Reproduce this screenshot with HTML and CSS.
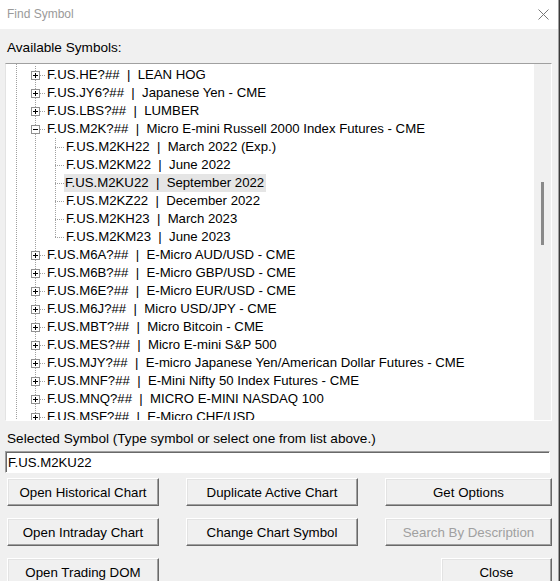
FILE: index.html
```html
<!DOCTYPE html>
<html lang="en">
<head>
    <meta charset="UTF-8">
    <title>Find Symbol</title>
    <link rel="stylesheet" href="styles.css">
</head>
<body>
    <div class="window">
        <div class="titlebar">
            <span class="title">Find Symbol</span>
            <svg class="close-x" width="11" height="11" viewBox="0 0 11 11">
                <path d="M0.5 0.5L10.5 10.5M10.5 0.5L0.5 10.5" stroke="#777" stroke-width="1"/>
            </svg>
        </div>

        <div class="content">
            <div class="caption">Available Symbols:</div>

            <div class="tree">
                <div class="tree-list">
                    <div class="node"><svg class="tgl" width="9" height="9"><rect x=".5" y=".5" width="8" height="8" fill="#fff" stroke="#919191"/><path d="M2 4.5h5M4.5 2v5" stroke="#000"/></svg><span class="hline"></span><span class="text">F.US.HE?##  |  LEAN HOG</span></div>
                    <div class="node"><svg class="tgl" width="9" height="9"><rect x=".5" y=".5" width="8" height="8" fill="#fff" stroke="#919191"/><path d="M2 4.5h5M4.5 2v5" stroke="#000"/></svg><span class="hline"></span><span class="text">F.US.JY6?##  |  Japanese Yen - CME</span></div>
                    <div class="node"><svg class="tgl" width="9" height="9"><rect x=".5" y=".5" width="8" height="8" fill="#fff" stroke="#919191"/><path d="M2 4.5h5M4.5 2v5" stroke="#000"/></svg><span class="hline"></span><span class="text">F.US.LBS?##  |  LUMBER</span></div>
                    <div class="node"><svg class="tgl" width="9" height="9"><rect x=".5" y=".5" width="8" height="8" fill="#fff" stroke="#919191"/><path d="M2 4.5h5" stroke="#000"/></svg><span class="hline"></span><span class="text">F.US.M2K?##  |  Micro E-mini Russell 2000 Index Futures - CME</span></div>

                    <div class="node child"><span class="chline"></span><span class="text">F.US.M2KH22  |  March 2022 (Exp.)</span></div>
                    <div class="node child"><span class="chline"></span><span class="text">F.US.M2KM22  |  June 2022</span></div>
                    <div class="node child"><span class="chline short"></span><span class="text selected">F.US.M2KU22  |  September 2022</span></div>
                    <div class="node child"><span class="chline"></span><span class="text">F.US.M2KZ22  |  December 2022</span></div>
                    <div class="node child"><span class="chline"></span><span class="text">F.US.M2KH23  |  March 2023</span></div>
                    <div class="node child last"><span class="chline"></span><span class="text">F.US.M2KM23  |  June 2023</span></div>

                    <div class="node"><svg class="tgl" width="9" height="9"><rect x=".5" y=".5" width="8" height="8" fill="#fff" stroke="#919191"/><path d="M2 4.5h5M4.5 2v5" stroke="#000"/></svg><span class="hline"></span><span class="text">F.US.M6A?##  |  E-Micro AUD/USD - CME</span></div>
                    <div class="node"><svg class="tgl" width="9" height="9"><rect x=".5" y=".5" width="8" height="8" fill="#fff" stroke="#919191"/><path d="M2 4.5h5M4.5 2v5" stroke="#000"/></svg><span class="hline"></span><span class="text">F.US.M6B?##  |  E-Micro GBP/USD - CME</span></div>
                    <div class="node"><svg class="tgl" width="9" height="9"><rect x=".5" y=".5" width="8" height="8" fill="#fff" stroke="#919191"/><path d="M2 4.5h5M4.5 2v5" stroke="#000"/></svg><span class="hline"></span><span class="text">F.US.M6E?##  |  E-Micro EUR/USD - CME</span></div>
                    <div class="node"><svg class="tgl" width="9" height="9"><rect x=".5" y=".5" width="8" height="8" fill="#fff" stroke="#919191"/><path d="M2 4.5h5M4.5 2v5" stroke="#000"/></svg><span class="hline"></span><span class="text">F.US.M6J?##  |  Micro USD/JPY - CME</span></div>
                    <div class="node"><svg class="tgl" width="9" height="9"><rect x=".5" y=".5" width="8" height="8" fill="#fff" stroke="#919191"/><path d="M2 4.5h5M4.5 2v5" stroke="#000"/></svg><span class="hline"></span><span class="text">F.US.MBT?##  |  Micro Bitcoin - CME</span></div>
                    <div class="node"><svg class="tgl" width="9" height="9"><rect x=".5" y=".5" width="8" height="8" fill="#fff" stroke="#919191"/><path d="M2 4.5h5M4.5 2v5" stroke="#000"/></svg><span class="hline"></span><span class="text">F.US.MES?##  |  Micro E-mini S&amp;P 500</span></div>
                    <div class="node"><svg class="tgl" width="9" height="9"><rect x=".5" y=".5" width="8" height="8" fill="#fff" stroke="#919191"/><path d="M2 4.5h5M4.5 2v5" stroke="#000"/></svg><span class="hline"></span><span class="text">F.US.MJY?##  |  E-micro Japanese Yen/American Dollar Futures - CME</span></div>
                    <div class="node"><svg class="tgl" width="9" height="9"><rect x=".5" y=".5" width="8" height="8" fill="#fff" stroke="#919191"/><path d="M2 4.5h5M4.5 2v5" stroke="#000"/></svg><span class="hline"></span><span class="text">F.US.MNF?##  |  E-Mini Nifty 50 Index Futures - CME</span></div>
                    <div class="node"><svg class="tgl" width="9" height="9"><rect x=".5" y=".5" width="8" height="8" fill="#fff" stroke="#919191"/><path d="M2 4.5h5M4.5 2v5" stroke="#000"/></svg><span class="hline"></span><span class="text">F.US.MNQ?##  |  MICRO E-MINI NASDAQ 100</span></div>
                    <div class="node"><svg class="tgl" width="9" height="9"><rect x=".5" y=".5" width="8" height="8" fill="#fff" stroke="#919191"/><path d="M2 4.5h5M4.5 2v5" stroke="#000"/></svg><span class="hline"></span><span class="text">F.US.MSF?##  |  E-Micro CHF/USD</span></div>
                </div>
                <div class="scrollbar">
                    <div class="thumb"></div>
                </div>
            </div>

            <div class="caption selected-caption">Selected Symbol (Type symbol or select one from list above.)</div>
            <input class="symbol-input" type="text" value="F.US.M2KU22">

            <div class="buttons">
                <button class="button">Open Historical Chart</button>
                <button class="button">Duplicate Active Chart</button>
                <button class="button">Get Options</button>
                <button class="button">Open Intraday Chart</button>
                <button class="button">Change Chart Symbol</button>
                <button class="button" disabled>Search By Description</button>
                <button class="button">Open Trading DOM</button>
                <span></span>
                <button class="button close-button">Close</button>
            </div>
        </div>
    </div>
</body>
</html>
```

FILE: styles.css
```css
* {
    margin: 0;
    padding: 0;
    box-sizing: border-box;
}

html {
    background: #3a3a3a;
}

body {
    font-family: "Liberation Sans", Arial, sans-serif;
    font-size: 13px;
    color: #000;
    width: 560px;
    height: 581px;
    overflow: hidden;
}

.window {
    width: 559px;
    height: 581px;
    background: #f0f0f0;
    border-right: 1px solid #a0a0a0;
    overflow: hidden;
}

.titlebar {
    height: 29px;
    background: #fff;
    display: flex;
    align-items: center;
    justify-content: space-between;
    padding: 0 9px 1px 7px;
}

.title {
    font-size: 12px;
    color: #9a9a9a;
}

.content {
    padding: 0 6px 0 5px;
}

.caption {
    font-size: 13.6px;
    line-height: 15px;
    margin-top: 11px;
    padding-left: 2px;
}

.tree {
    margin-top: 8px;
    height: 358px;
    display: flex;
    border: 1px solid;
    border-color: #a0a0a0 #fff #fff #e3e3e3;
    box-shadow: inset 0 1px 0 #696969;
}

.tree-list {
    flex: 1;
    position: relative;
    overflow: hidden;
    background: #fff;
    padding-top: 2px;
}

.tree-list::before {
    content: "";
    position: absolute;
    left: 10px;
    top: 0;
    bottom: 0;
    width: 1px;
    background: repeating-linear-gradient(to bottom, #a0a0a0 0 1px, transparent 1px 2px);
}

.node {
    position: relative;
    height: 18px;
    display: flex;
    align-items: center;
    padding-left: 25px;
    white-space: pre;
}

.node::before {
    content: "";
    position: absolute;
    left: 29px;
    top: 0;
    bottom: 0;
    width: 1px;
    background: repeating-linear-gradient(to bottom, #a0a0a0 0 1px, transparent 1px 2px);
}

.tgl {
    position: relative;
    z-index: 1;
    flex: none;
}

.hline {
    width: 6px;
    height: 1px;
    margin-right: 1px;
    background: repeating-linear-gradient(to right, #a0a0a0 0 1px, transparent 1px 2px);
}

.text {
    line-height: 18px;
    font-size: 13.2px;
}

.child {
    padding-left: 49px;
}

.child::after {
    content: "";
    position: absolute;
    left: 49px;
    top: 0;
    bottom: 0;
    width: 1px;
    background: repeating-linear-gradient(to bottom, #a0a0a0 0 1px, transparent 1px 2px);
}

.child.last::after {
    bottom: 9px;
}

.chline {
    width: 10px;
    height: 1px;
    margin-right: 1px;
    background: repeating-linear-gradient(to right, #a0a0a0 0 1px, transparent 1px 2px);
}

.chline.short {
    width: 9px;
    margin-right: 0;
}

.selected {
    background: #e5e5e5;
    padding: 0 2px 0 1px;
}

.scrollbar {
    width: 17px;
    background: #f0f0f0;
}

.thumb {
    width: 3px;
    height: 63px;
    margin: 118px 0 0 7px;
    background: #8a8a8a;
}

.selected-caption {
    margin-top: 10px;
}

.symbol-input {
    display: block;
    width: 545px;
    height: 22px;
    margin-top: 5px;
    padding: 0 2px;
    font-family: "Liberation Sans", Arial, sans-serif;
    font-size: 13.2px;
    color: #000;
    background: #fff;
    border: 1px solid;
    border-color: #a0a0a0 #fff #fff #a0a0a0;
    box-shadow: inset 1px 1px 0 #696969;
    outline: none;
}

.buttons {
    display: grid;
    grid-template-columns: 152px 172px 167px;
    justify-content: space-between;
    row-gap: 12px;
    margin: 5px 0 0 2px;
}

.button {
    height: 28px;
    font-family: "Liberation Sans", Arial, sans-serif;
    font-size: 13.3px;
    color: #000;
    background: #f0f0f0;
    border: 1px solid;
    border-color: #fff #696969 #696969 #fff;
    box-shadow: inset -1px -1px 0 #a0a0a0, inset 1px 1px 0 #e3e3e3;
}

.button:disabled {
    color: #a0a0a0;
}

.close-button {
    width: 111px;
    justify-self: end;
}
```
